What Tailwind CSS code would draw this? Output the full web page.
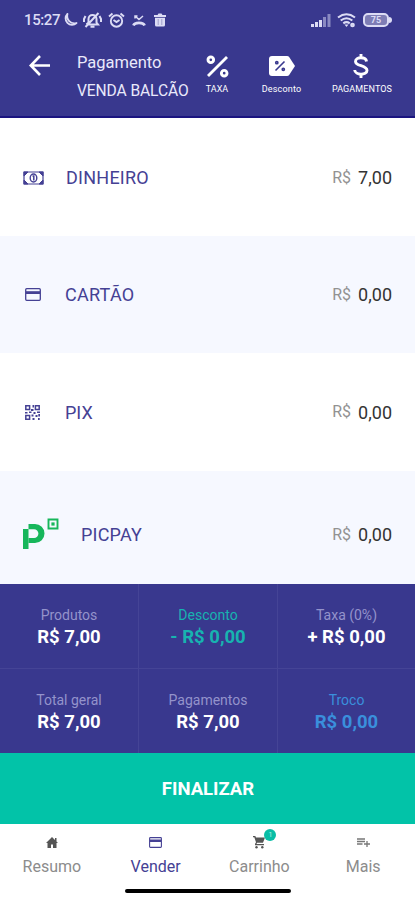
<!DOCTYPE html>
<html lang="pt-BR">
<head>
<meta charset="utf-8">
<meta name="viewport" content="width=device-width, initial-scale=1">
<title>Pagamento</title>
<script src="https://cdn.jsdelivr.net/npm/@tailwindcss/browser@4"></script>
</head>
<body class="w-[415px] h-[900px] overflow-hidden bg-white font-['Roboto',sans-serif] flex flex-col whitespace-nowrap">
<header class="h-[118px] shrink-0 bg-[#39388e] border-b-2 border-[#1b1580] text-white flex flex-col">
  <div class="h-10 flex items-center pl-6 pr-[26px] text-[#dcdcf5]">
    <span class="text-[15px] leading-5 w-[38px] tracking-[-0.4px] font-medium">15:27</span>
    <svg class="w-4 h-4" viewBox="0 0 16 16" fill="none" stroke="currentColor" stroke-width="1.800" stroke-linejoin="round"><path d="M5.500 1.800A6.300 6.300 0 1 0 14.500 11C8.500 12.500 4 7.500 5.500 1.800Z"/></svg>
    <svg class="w-[19px] h-[18px] ml-[5px]" viewBox="0 0 19 18" fill="none" stroke="currentColor" stroke-width="2"><path d="M4 13.500h11l-1.500-2V8c0-5.500-8-5.500-8 0v3.500l-2 2M7.500 15.800h4M2.500 16 15.500 2M2.500 5 1 8v3M16.500 5 18 8v3"/></svg>
    <svg class="w-[17px] h-[17px] ml-[6px]" viewBox="0 0 17 17" fill="none" stroke="currentColor" stroke-width="1.900"><circle cx="8.500" cy="9" r="5.700"/><path d="M1 4.500 4.500 1.500M16 4.500 12.500 1.500M5.500 8l3 2 3-2"/></svg>
    <svg class="w-[14px] h-[14px] ml-[7px]" viewBox="0 0 14 14" fill="none" stroke="currentColor"><path stroke-width="1.500" d="M3 3 7 6.500l4-3.500M3 5.500V3h2.500"/><path stroke-width="2.800" d="M1.500 12.500C2.500 9 11.500 9 12.500 12.500"/></svg>
    <svg class="w-3 h-[14px] ml-2" viewBox="0 0 12 14" fill="currentColor"><path d="M0 2h3.500l1-1.500h3l1 1.500H12v2H0zM1 4.800h10V12q0 1.500-1.500 1.500h-7Q1 13.500 1 12z"/><path d="M4.200 6v6M7.800 6v6" stroke="#9a99c6" stroke-width=".9"/></svg>
    <svg class="w-5 h-[13px] ml-auto" viewBox="0 0 20 13" fill="currentColor"><path d="M0 10h3v3H0zM4 8h3v5H4zM8 6h3v7H8z"/><path opacity=".5" d="M12 3h3v10h-3zM16.500 0h3v13h-3z"/></svg>
    <svg class="w-[19px] h-[15px] ml-[6px]" viewBox="0 0 19 15" fill="none" stroke="currentColor" stroke-width="2.100"><path d="M1 4.500Q9.500-2 18 4.500M3.700 7.500q5.800-4.500 11.600 0M6.300 10.300q3.200-2.400 6.400 0"/><path d="M7.500 11.500h4l-2 2.500z" fill="currentColor" stroke="none"/><circle cx="15.500" cy="12" r="1.300"/></svg>
    <span class="relative ml-[7px] w-[26px] h-[14px] rounded-[5px] border-2 border-current bg-white/35 text-[9px] leading-[10px] text-center font-bold">75<i class="absolute -right-[5px] top-[2px] w-[3px] h-[6px] rounded-r bg-current"></i></span>
  </div>
  <div class="flex-1 flex">
    <div class="w-[77px] pt-[15px] pl-[29px]">
      <svg class="w-[21px] h-[21px]" viewBox="0 0 21 21" fill="none" stroke="currentColor" stroke-width="2.600"><path d="M11 1 1.800 10.500 11 20M2 10.500h19"/></svg>
    </div>
    <div class="w-[119px] pt-[9px] text-[#e9e9fb]">
      <div class="text-[16.500px] leading-7">Pagamento</div>
      <div class="text-[15.600px] leading-7 tracking-[-0.1px]">VENDA BALCÃO</div>
    </div>
    <div class="w-[42px] pt-[15px] flex flex-col items-center">
      <svg class="w-[23px] h-[23px]" viewBox="0 0 23 23" fill="none" stroke="currentColor" stroke-width="2.900"><path d="M2 21 21 2"/><circle cx="4.800" cy="4.800" r="2.800"/><circle cx="18.200" cy="18.200" r="2.800"/></svg>
      <span class="text-[9px] leading-3 mt-[5px]">TAXA</span>
    </div>
    <div class="w-[87px] pt-[15px] flex flex-col items-center">
      <svg class="w-[26px] h-5 mt-px" viewBox="0 0 26 20"><path d="M3 0h15q1.500 0 2.300 1.200L26 10l-5.700 8.800Q19.500 20 18 20H3q-3 0-3-3V3q0-3 3-3Z" fill="white"/><g stroke="#39388e" stroke-width="1.600" fill="none"><path d="m6.500 14.500 9-9"/><circle cx="7.800" cy="6.700" r="1.100"/><circle cx="14.300" cy="13.300" r="1.100"/></g></svg>
      <span class="text-[9px] leading-3 mt-[7px] tracking-[0.2px]">Desconto</span>
    </div>
    <div class="w-[74px] pt-[14px] flex flex-col items-center">
      <svg class="w-4 h-6 -ml-[2px]" viewBox="0 0 16 24" fill="none" stroke="currentColor" stroke-width="2.900"><path d="M13.500 7.500C13 2.500 2.500 2.500 2.500 7.500c0 5 11.500 3.500 11.500 9 0 5-12 5-12.300-.5M8 0v4M8 20v4"/></svg>
      <span class="text-[9px] leading-3 mt-[5px] tracking-[0.1px]">PAGAMENTOS</span>
    </div>
  </div>
</header>
<main class="shrink-0 text-[18px] text-[#454194]">
  <div class="h-[118px] flex items-center px-[23px] pt-px">
    <svg class="w-[21px] h-[14px]" viewBox="0 0 21 14" fill="none" stroke="currentColor"><path stroke-width="1.200" d="M1 1h19v12H1z"/><path d="M1 1h4L1 5zM20 1h-4l4 4zM1 13h4L1 9zM20 13h-4l4-4z" fill="currentColor"/><ellipse cx="10.500" cy="7" rx="3.300" ry="4" stroke-width="1.400"/><path stroke-width="1.500" d="M9.500 5h1.300v4.500"/></svg>
    <span class="ml-[22px] tracking-[0.25px]">DINHEIRO</span>
    <span class="ml-auto text-[16px] text-[#929292] mr-[7px]">R$</span><span class="text-[#333]">7,00</span>
  </div>
  <div class="h-[117px] bg-[#f6f8ff] flex items-center px-[23px]">
    <svg class="w-4 h-[13px] ml-[2px]" viewBox="0 0 16 13"><rect x=".7" y=".7" width="14.600" height="11.600" rx="1" fill="none" stroke="currentColor" stroke-width="1.300"/><path d="M1 3.200h14v2.800H1z" fill="currentColor"/></svg>
    <span class="ml-6 tracking-[0.25px]">CARTÃO</span>
    <span class="ml-auto text-[16px] text-[#929292] mr-[7px]">R$</span><span class="text-[#333]">0,00</span>
  </div>
  <div class="h-[118px] flex items-center px-[23px]">
    <svg class="w-[15px] h-[15px] ml-[2px]" viewBox="0 0 15 15"><g fill="none" stroke="currentColor" stroke-width="1.500"><path d="M.8.8h3.800v3.800H.8zM10.400.8h3.800v3.800h-3.800zM.8 10.400h3.800v3.800H.8z"/></g><path fill="currentColor" d="M7.500 0h1.500v2.500H7.500zM6 4h2.500v2H6zM0 7h2.500v1.500H0zM4 6.500h2.500V8H4zM8.500 7h2v2h-2zM12 6.500h3V8h-3zM6.500 9.500H8.500v2h-2zM10.500 10h2v2h-2zM13.300 9H15v2.500h-1.700zM7.500 13h2v2h-2zM13 13h1.700v2H13z"/></svg>
    <span class="ml-[25px]">PIX</span>
    <span class="ml-auto text-[16px] text-[#929292] mr-[7px]">R$</span><span class="text-[#333]">0,00</span>
  </div>
  <div class="h-[113px] bg-[#f6f8ff] flex items-center px-[23px] pt-[14px]">
    <svg class="w-9 h-[31px] -mt-[2px]" viewBox="0 0 36 31" fill="#17b65b"><path d="M0 11h5.500v20H0z"/><path d="M5.500 6H12a9 9 0 0 1 0 19H5.500v-5H11a4.200 4.200 0 0 0 0-8.800H5.500z"/><path fill="none" stroke="#17b65b" stroke-width="1.900" d="M25.500 1.500h9v9h-9z"/><path d="M28.400 4.400h3.200v3.200h-3.200z"/></svg>
    <span class="ml-[22px] tracking-[0.2px]">PICPAY</span>
    <span class="ml-auto text-[16px] text-[#929292] mr-[7px]">R$</span><span class="text-[#333]">0,00</span>
  </div>
</main>
<section class="h-[169px] shrink-0 grid grid-cols-[139px_139px_137px] grid-rows-2 bg-[#39388e] text-center text-[18.500px] leading-[22px] font-bold text-white">
  <div class="border-r border-b border-[#454496] pt-[20px]"><p class="text-[14px] font-normal text-[#9493cb]">Produtos</p>R$ 7,00</div>
  <div class="border-r border-b border-[#454496] pt-[20px] text-[#17b3b0]"><p class="text-[14px] font-normal">Desconto</p>- R$ 0,00</div>
  <div class="border-b border-[#454496] pt-[20px]"><p class="text-[14px] font-normal text-[#9493cb]">Taxa (0%)</p>+ R$ 0,00</div>
  <div class="border-r border-[#454496] pt-[20px]"><p class="text-[14px] font-normal text-[#9493cb]">Total geral</p>R$ 7,00</div>
  <div class="border-r border-[#454496] pt-[20px]"><p class="text-[14px] font-normal text-[#9493cb]">Pagamentos</p>R$ 7,00</div>
  <div class="pt-[20px] text-[#3a8fdc]"><p class="text-[14px] font-normal">Troco</p>R$ 0,00</div>
</section>
<button class="h-[71px] shrink-0 bg-[#02c3a8] text-white text-[18.500px] font-bold pt-[2px] pl-px">FINALIZAR</button>
<nav class="relative h-[76px] shrink-0 grid grid-cols-4 text-[#8c8c8c] text-[16px] leading-5 text-center">
  <div class="pt-3 flex flex-col items-center"><svg class="w-3 h-[13px]" viewBox="0 0 12 13" fill="#555"><path d="M6 1 0 7h1.500v5H5V8.500h2V12h3.500V7H12l-1.500-1.500V2H9v2z"/></svg><span class="mt-[8px]">Resumo</span></div>
  <div class="pt-3 flex flex-col items-center text-[#454194]"><svg class="w-[13px] h-[11px] mt-px" viewBox="0 0 13 11"><rect x=".6" y=".6" width="11.800" height="9.800" rx=".8" fill="none" stroke="currentColor" stroke-width="1.100"/><path d="M1 2.500h11v2.500H1z" fill="currentColor"/></svg><span class="mt-[9px]">Vender</span></div>
  <div class="pt-3 flex flex-col items-center"><span class="relative block"><svg class="block w-3 h-[13px]" viewBox="0 0 12 13" fill="#555"><path d="M0 0h2.300l.7 1.500h9L10 6.800H4l-.5 1.200H11v1.200H2V8l1-1.700L1.300 1.200H0z"/><circle cx="3.500" cy="11.300" r="1.200"/><circle cx="9.300" cy="11.300" r="1.200"/></svg><b class="absolute left-[11px] -top-[7px] w-3 h-3 rounded-full bg-[#09bea6] text-[#b5f5e8] text-[7px] leading-3 font-normal">1</b></span><span class="mt-[8px]">Carrinho</span></div>
  <div class="pt-3 flex flex-col items-center"><svg class="w-[13px] h-[10px] mt-[2px]" viewBox="0 0 13 10" fill="none" stroke="#777" stroke-width="1.300"><path d="M0 1h8M0 3.500h8M0 6h5.500M10 3v6M7 6h6"/></svg><span class="mt-[9px]">Mais</span></div>
  <i class="absolute left-[125px] top-[65px] w-[166px] h-1 rounded-full bg-black"></i>
</nav>
</body>
</html>
